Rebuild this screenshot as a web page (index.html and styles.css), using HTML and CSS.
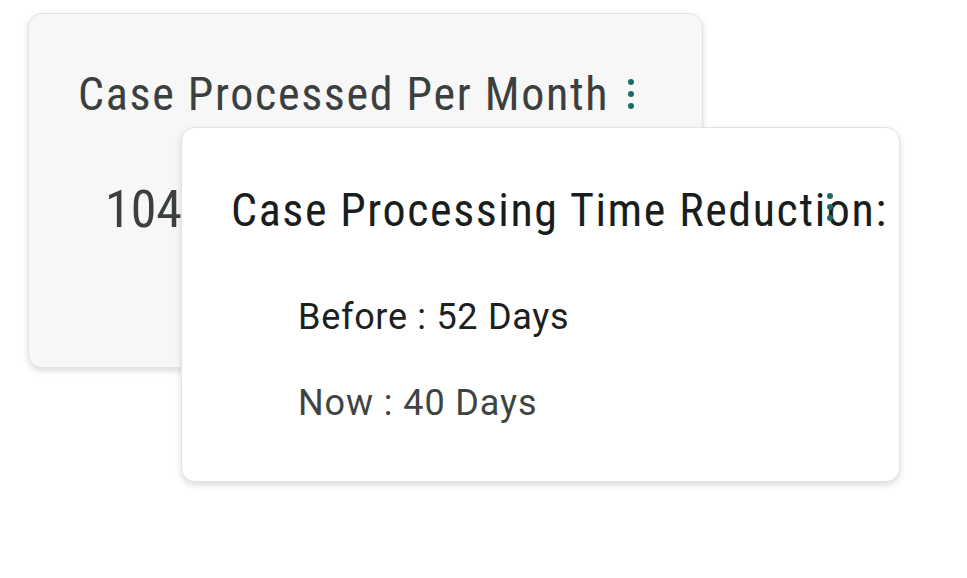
FILE: index.html
```html
<!DOCTYPE html>
<html lang="en">
<head>
<meta charset="utf-8">
<title>Case metrics</title>
<link rel="stylesheet" href="styles.css">
</head>
<body>
<main class="stage">
  <section class="card card-back">
    <header class="card-head">
      <h2 class="card-title">Case Processed Per Month</h2>
      <span class="kebab" aria-hidden="true"><i></i><i></i><i></i></span>
    </header>
    <p class="metric">104</p>
  </section>
  <section class="card card-front">
    <header class="card-head">
      <h2 class="card-title title-front">Case Processing Time Reduction:</h2>
      <span class="kebab kebab-front" aria-hidden="true"><i></i><i></i><i></i></span>
    </header>
    <ul class="stats">
      <li class="stat stat-before">Before : 52 Days</li>
      <li class="stat stat-now">Now : 40 Days</li>
    </ul>
  </section>
</main>
</body>
</html>
```
FILE: styles.css
```css
* { box-sizing: border-box; }
html, body { margin: 0; padding: 0; background: #ffffff; }
body {
  font-family: "Roboto Condensed", Roboto, "DejaVu Sans", sans-serif;
  font-stretch: condensed;
  width: 967px;
  height: 578px;
  overflow: hidden;
}
.stage {
  display: flex;
  flex-direction: column;
  align-items: flex-start;
  padding: 13px 0 0 28px;
}
.card {
  border-radius: 14px;
  border: 1px solid #e4e4e6;
  box-shadow: 0 3px 6px rgba(0, 0, 0, 0.14);
}
.card-back {
  width: 675px;
  height: 355px;
  background: #f7f7f7;
  padding: 57px 0 0 49px;
}
.card-front {
  position: relative;
  width: 719px;
  height: 355px;
  margin: -241px 0 0 153px;
  background: #ffffff;
  padding: 59px 0 0 49px;
}
.card-head {
  display: flex;
  align-items: center;
  gap: 19px;
}
.card-title {
  margin: 0;
  font-size: 46px;
  font-weight: 400;
  line-height: 46px;
  letter-spacing: 1.7px;
  white-space: nowrap;
  color: #3b403f;
}
.title-front {
  letter-spacing: 1.6px;
  color: #191e1d;
}
.kebab {
  display: flex;
  flex-direction: column;
  gap: 6px;
}
.kebab i {
  display: block;
  width: 6px;
  height: 6px;
  border-radius: 50%;
  background: #1e6b66;
}
.kebab-front {
  position: absolute;
  left: 645px;
  top: 65px;
  gap: 5px;
}
.metric {
  margin: 67px 0 0 27px;
  font-size: 52px;
  line-height: 52px;
  letter-spacing: 0;
  color: #3b403f;
}
.stats {
  list-style: none;
  margin: 66px 0 0 67px;
  padding: 0;
  display: flex;
  flex-direction: column;
  gap: 50px;
}
.stat {
  font-family: Roboto, "DejaVu Sans", sans-serif;
  font-stretch: normal;
  font-size: 36px;
  line-height: 36px;
  letter-spacing: 0.7px;
}
.stat-before { color: #1c2120; }
.stat-now { color: #3f4443; letter-spacing: 0.9px; }
```
